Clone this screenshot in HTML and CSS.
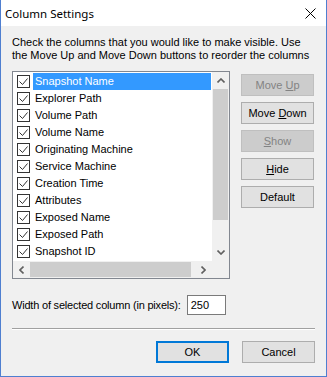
FILE: index.html
```html
<!DOCTYPE html>
<html lang="en">
<head>
    <meta charset="UTF-8">
    <title>Column Settings</title>
    <link rel="stylesheet" href="styles.css">
</head>
<body>
    <div class="window">
        <div class="titlebar">
            <span class="title">Column Settings</span>
            <svg class="close" width="11" height="11" viewBox="0 0 11 11">
                <path d="M0.5 0.5 L10.5 10.5 M10.5 0.5 L0.5 10.5" stroke="#000" stroke-width="1" fill="none"/>
            </svg>
        </div>
        <div class="content">
            <p class="intro">Check the columns that you would like to make visible. Use the Move Up and Move Down buttons to reorder the columns</p>
            <div class="main">
                <div class="listbox">
                    <ul class="items">
                        <li class="selected"><span class="check"><svg width="11" height="11" viewBox="0 0 11 11"><path d="M1.5 5.5 L4.5 8.5 L9.5 2.5" stroke="#333" stroke-width="1" fill="none"/></svg></span><span class="label">Snapshot Name</span></li>
                        <li><span class="check"><svg width="11" height="11" viewBox="0 0 11 11"><path d="M1.5 5.5 L4.5 8.5 L9.5 2.5" stroke="#333" stroke-width="1" fill="none"/></svg></span><span class="label">Explorer Path</span></li>
                        <li><span class="check"><svg width="11" height="11" viewBox="0 0 11 11"><path d="M1.5 5.5 L4.5 8.5 L9.5 2.5" stroke="#333" stroke-width="1" fill="none"/></svg></span><span class="label">Volume Path</span></li>
                        <li><span class="check"><svg width="11" height="11" viewBox="0 0 11 11"><path d="M1.5 5.5 L4.5 8.5 L9.5 2.5" stroke="#333" stroke-width="1" fill="none"/></svg></span><span class="label">Volume Name</span></li>
                        <li><span class="check"><svg width="11" height="11" viewBox="0 0 11 11"><path d="M1.5 5.5 L4.5 8.5 L9.5 2.5" stroke="#333" stroke-width="1" fill="none"/></svg></span><span class="label">Originating Machine</span></li>
                        <li><span class="check"><svg width="11" height="11" viewBox="0 0 11 11"><path d="M1.5 5.5 L4.5 8.5 L9.5 2.5" stroke="#333" stroke-width="1" fill="none"/></svg></span><span class="label">Service Machine</span></li>
                        <li><span class="check"><svg width="11" height="11" viewBox="0 0 11 11"><path d="M1.5 5.5 L4.5 8.5 L9.5 2.5" stroke="#333" stroke-width="1" fill="none"/></svg></span><span class="label">Creation Time</span></li>
                        <li><span class="check"><svg width="11" height="11" viewBox="0 0 11 11"><path d="M1.5 5.5 L4.5 8.5 L9.5 2.5" stroke="#333" stroke-width="1" fill="none"/></svg></span><span class="label">Attributes</span></li>
                        <li><span class="check"><svg width="11" height="11" viewBox="0 0 11 11"><path d="M1.5 5.5 L4.5 8.5 L9.5 2.5" stroke="#333" stroke-width="1" fill="none"/></svg></span><span class="label">Exposed Name</span></li>
                        <li><span class="check"><svg width="11" height="11" viewBox="0 0 11 11"><path d="M1.5 5.5 L4.5 8.5 L9.5 2.5" stroke="#333" stroke-width="1" fill="none"/></svg></span><span class="label">Exposed Path</span></li>
                        <li><span class="check"><svg width="11" height="11" viewBox="0 0 11 11"><path d="M1.5 5.5 L4.5 8.5 L9.5 2.5" stroke="#333" stroke-width="1" fill="none"/></svg></span><span class="label">Snapshot ID</span></li>
                    </ul>
                    <div class="vscroll">
                        <div class="arrow"><svg width="8" height="5" viewBox="0 0 8 5"><path d="M0.5 4.5 L4 1 L7.5 4.5" stroke="#606060" stroke-width="1.6" fill="none"/></svg></div>
                        <div class="vtrack"><div class="vthumb"></div></div>
                        <div class="arrow"><svg width="8" height="5" viewBox="0 0 8 5"><path d="M0.5 0.5 L4 4 L7.5 0.5" stroke="#606060" stroke-width="1.6" fill="none"/></svg></div>
                    </div>
                    <div class="hscroll">
                        <div class="arrow"><svg width="5" height="8" viewBox="0 0 5 8"><path d="M4.5 0.5 L1 4 L4.5 7.5" stroke="#606060" stroke-width="1.6" fill="none"/></svg></div>
                        <div class="htrack"><div class="hthumb"></div></div>
                        <div class="arrow"><svg width="5" height="8" viewBox="0 0 5 8"><path d="M0.5 0.5 L4 4 L0.5 7.5" stroke="#606060" stroke-width="1.6" fill="none"/></svg></div>
                    </div>
                    <div class="corner"></div>
                </div>
                <div class="side-buttons">
                    <button class="btn disabled">Move <u>U</u>p</button>
                    <button class="btn">Move <u>D</u>own</button>
                    <button class="btn disabled"><u>S</u>how</button>
                    <button class="btn"><u>H</u>ide</button>
                    <button class="btn">Default</button>
                </div>
            </div>
            <div class="width-row">
                <span class="width-label">Width of selected column (in pixels):</span>
                <div class="width-input">250</div>
            </div>
            <div class="separator"></div>
            <div class="footer">
                <button class="btn default">OK</button>
                <button class="btn">Cancel</button>
            </div>
        </div>
    </div>
</body>
</html>
```

FILE: styles.css
```css
body {
    margin: 0;
    padding: 0;
    font-family: 'Liberation Sans', Arial, sans-serif;
    font-size: 11px;
    color: #000;
    background-color: #f0f0f0;
}
.window {
    width: 327px;
    height: 377px;
    box-sizing: border-box;
    border: 1px solid #4f7fd0;
    border-top: none;
    background-color: #f0f0f0;
    display: flex;
    flex-direction: column;
}
.titlebar {
    height: 26px;
    background-color: #fff;
    display: flex;
    align-items: center;
    justify-content: space-between;
    padding: 0 10px 0 4px;
}
.title {
    font-family: 'Noto Sans', sans-serif;
    font-size: 11.5px;
    color: #000;
}
.close {
    display: block;
}
.content {
    padding: 10px 11px 0 11px;
}
.intro {
    margin: 0 0 9px 0;
    line-height: 13px;
}
.main {
    display: flex;
    gap: 11px;
}
.listbox {
    width: 218px;
    height: 208px;
    box-sizing: border-box;
    border: 1px solid #828790;
    background-color: #fff;
    display: grid;
    grid-template-columns: 1fr 17px;
    grid-template-rows: 1fr 17px;
}
.items {
    list-style: none;
    margin: 0;
    padding: 1px 0 0 0;
    overflow: hidden;
}
.items li {
    height: 17px;
    display: flex;
    align-items: center;
    padding-left: 4px;
}
.check {
    width: 13px;
    height: 13px;
    box-sizing: border-box;
    border: 1px solid #333;
    background-color: #fff;
    display: flex;
    align-items: center;
    justify-content: center;
    margin-right: 3px;
}
.check svg {
    display: block;
}
.label {
    height: 17px;
    line-height: 17px;
    padding: 0 2px 0 2px;
    flex: 1;
    white-space: nowrap;
}
.selected .label {
    background-color: #3399ff;
    color: #fff;
    margin-right: 1px;
}
.vscroll {
    background-color: #f0f0f0;
    display: flex;
    flex-direction: column;
}
.hscroll {
    background-color: #f0f0f0;
    display: flex;
}
.arrow {
    width: 17px;
    height: 17px;
    display: flex;
    align-items: center;
    justify-content: center;
    flex-shrink: 0;
}
.vtrack {
    flex: 1;
}
.vthumb {
    margin: 0 1px;
    height: 131px;
    background-color: #cdcdcd;
}
.htrack {
    flex: 1;
    display: flex;
    align-items: stretch;
}
.hthumb {
    margin: 1px 0;
    width: 161px;
    background-color: #cdcdcd;
}
.corner {
    background-color: #f0f0f0;
}
.side-buttons {
    display: flex;
    flex-direction: column;
    gap: 6px;
    padding-top: 3px;
}
.btn {
    width: 73px;
    height: 22px;
    box-sizing: border-box;
    border: 1px solid #adadad;
    background-color: #e1e1e1;
    font-family: 'Liberation Sans', Arial, sans-serif;
    font-size: 11px;
    color: #000;
    padding: 0;
}
.btn.disabled {
    background-color: #cccccc;
    border-color: #bfbfbf;
    color: #838383;
}
.btn.default {
    border-color: #0078d7;
    box-shadow: inset 0 0 0 1px #0078d7;
}
.width-row {
    display: flex;
    align-items: center;
    gap: 6px;
    margin-top: 16px;
}
.width-label {
    letter-spacing: -0.2px;
}
.width-input {
    width: 39px;
    height: 20px;
    box-sizing: border-box;
    border: 1px solid #7a7a7a;
    background-color: #fff;
    line-height: 18px;
    padding-left: 3px;
}
.separator {
    margin-top: 13px;
    border-top: 1px solid #a0a0a0;
    border-bottom: 1px solid #fff;
}
.footer {
    display: flex;
    justify-content: flex-end;
    gap: 13px;
    margin-top: 11px;
}
```
